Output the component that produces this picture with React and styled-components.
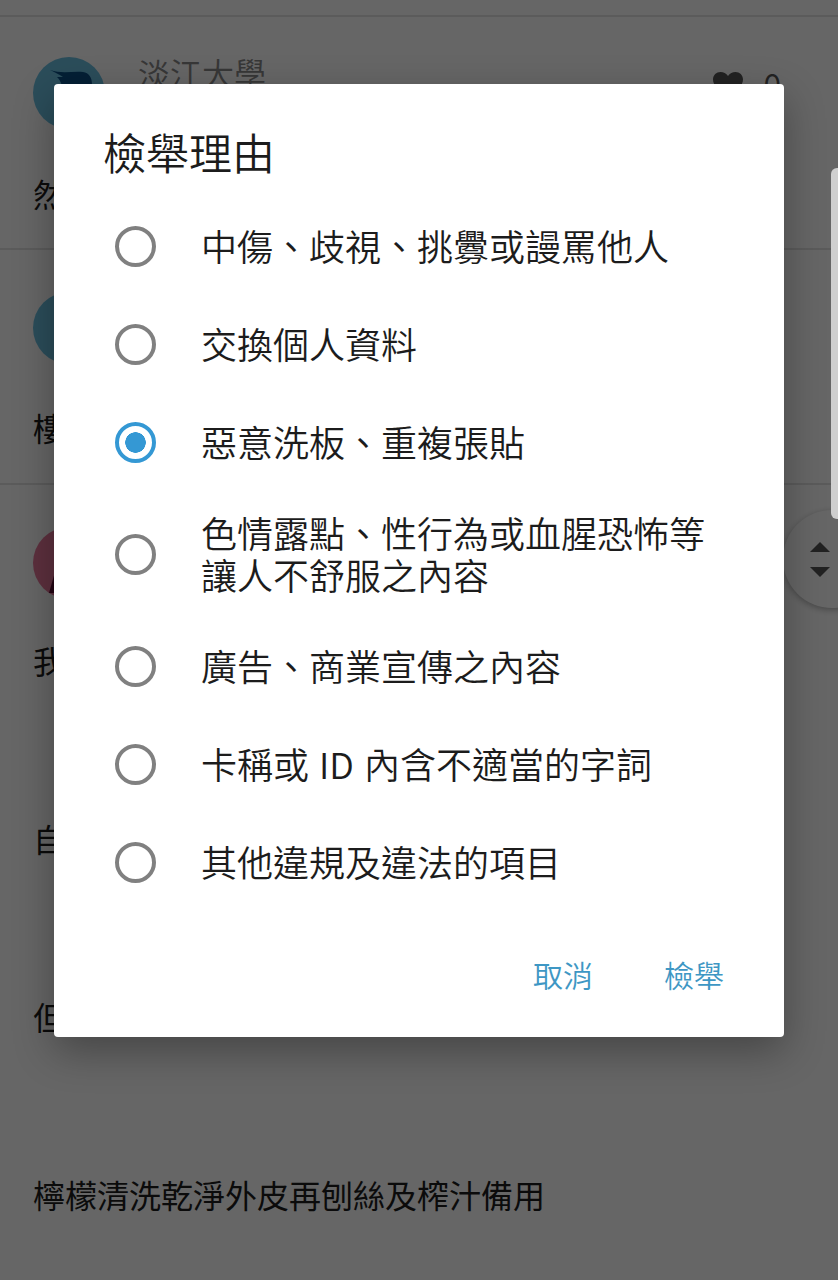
import React, { useState } from "react";
import styled, { createGlobalStyle } from "styled-components";

const reasons = [
  "中傷、歧視、挑釁或謾罵他人",
  "交換個人資料",
  "惡意洗板、重複張貼",
  "色情露點、性行為或血腥恐怖等讓人不舒服之內容",
  "廣告、商業宣傳之內容",
  "卡稱或 ID 內含不適當的字詞",
  "其他違規及違法的項目",
];

const App = () => {
  const [selected, setSelected] = useState(2);
  return (
    <Page>
      <GlobalStyle />
      <TopBar />
      <Post>
        <PostHeader>
          <Avatar color="#6bc0e2">
            <svg width="72" height="72" viewBox="0 0 72 72">
              <path d="M17 13 C28 17 40 14 50 15 C56 16 59 20 59 28 L54 36 L30 36 C30 30 28 24 24 20 L30 20 C26 17 21 15 17 13Z" fill="#0a4f86" />
            </svg>
          </Avatar>
          <Name>淡江大學</Name>
          <Likes>
            <svg width="30" height="28" viewBox="0 0 24 22">
              <path d="M12 21.5 C5 15.5 0 11.5 0 6.5 C0 3 2.7 .5 6 .5 C8.4 .5 10.6 1.7 12 3.8 C13.4 1.7 15.6 .5 18 .5 C21.3 .5 24 3 24 6.5 C24 11.5 19 15.5 12 21.5Z" fill="#555" />
            </svg>
            <LikeCount>0</LikeCount>
          </Likes>
        </PostHeader>
        <Body offset={42}>
          <Line>然</Line>
        </Body>
      </Post>
      <Post>
        <PostHeader>
          <Avatar color="#6bc0e2" />
        </PostHeader>
        <Body offset={41}>
          <Line>樓</Line>
        </Body>
      </Post>
      <Post last>
        <PostHeader>
          <Avatar color="#e8799c">
            <svg width="72" height="72" viewBox="0 0 72 72">
              <path d="M16 66 L28 24 L32 24 L27 66Z" fill="#5a0a30" />
            </svg>
          </Avatar>
        </PostHeader>
        <Body offset={39}>
          <Line>我</Line>
          <Line>自</Line>
          <Line>但</Line>
          <Line>檸檬清洗乾淨外皮再刨絲及榨汁備用</Line>
        </Body>
      </Post>

      <ScrollButton>
        <ArrowUp />
        <ArrowDown />
      </ScrollButton>

      <Overlay>
        <Dialog>
          <Title>檢舉理由</Title>
          <ReasonList>
            {reasons.map((text, i) => (
              <Reason key={text} onClick={() => setSelected(i)}>
                <Radio checked={selected === i} />
                <ReasonText>{text}</ReasonText>
              </Reason>
            ))}
          </ReasonList>
          <Actions>
            <ActionButton>取消</ActionButton>
            <ActionButton>檢舉</ActionButton>
          </Actions>
        </Dialog>
      </Overlay>
      <ScrollThumb />
    </Page>
  );
};
export default App;

const GlobalStyle = createGlobalStyle`
  html, body {
    margin: 0;
    padding: 0;
    background: #fff;
  }
  * {
    box-sizing: border-box;
  }
`;

const Page = styled.div`
  position: relative;
  height: 1280px;
  overflow: hidden;
  background: #fff;
  color: #1c1c1c;
  font-family: "Noto Sans CJK TC", "Noto Sans", sans-serif;
  font-weight: 350;
`;

const TopBar = styled.div`
  height: 17px;
  border-bottom: 2px solid #e4e4e4;
`;

const Post = styled.div`
  padding: 40px 33px 0;
  height: ${({ last }) => (last ? "auto" : "233px")};
  margin-bottom: 2px;
  border-bottom: ${({ last }) => (last ? "none" : "2px solid #e4e4e4")};
`;

const PostHeader = styled.div`
  display: flex;
  align-items: flex-start;
  gap: 33px;
  height: 72px;
`;

const Avatar = styled.div`
  width: 72px;
  height: 72px;
  flex-shrink: 0;
  border-radius: 50%;
  overflow: hidden;
  background: ${({ color }) => color};
  svg {
    display: block;
  }
`;

const Name = styled.div`
  margin-top: -5px;
  font-size: 32px;
  line-height: 40px;
  color: #8a8a8a;
`;

const Likes = styled.div`
  display: flex;
  align-items: center;
  gap: 20px;
  margin: 14px 24px 0 auto;
`;

const LikeCount = styled.span`
  margin-top: -4px;
  font-size: 32px;
  line-height: 28px;
  color: #555;
`;

const Body = styled.div`
  display: flex;
  flex-direction: column;
  gap: 134px;
  padding-top: ${({ offset }) => offset}px;
`;

const Line = styled.div`
  font-size: 32px;
  font-weight: 400;
  line-height: 44px;
`;

const ScrollThumb = styled.div`
  position: absolute;
  top: 168px;
  right: 0;
  width: 7px;
  height: 351px;
  background: #cfcfcf;
  border-radius: 6px 0 0 6px;
`;

const ScrollButton = styled.div`
  position: absolute;
  top: 510px;
  left: 783px;
  width: 98px;
  height: 98px;
  border-radius: 50%;
  background: #fff;
  box-shadow: 0 2px 6px rgba(0, 0, 0, 0.3);
  display: flex;
  flex-direction: column;
  align-items: flex-start;
  justify-content: center;
  gap: 15px;
  padding-left: 27px;
`;

const ArrowUp = styled.span`
  width: 0;
  height: 0;
  border-left: 10px solid transparent;
  border-right: 10px solid transparent;
  border-bottom: 10px solid #555;
`;

const ArrowDown = styled.span`
  width: 0;
  height: 0;
  border-left: 10px solid transparent;
  border-right: 10px solid transparent;
  border-top: 10px solid #555;
`;

const Overlay = styled.div`
  position: absolute;
  inset: 0;
  display: flex;
  justify-content: center;
  align-items: flex-start;
  padding-top: 84px;
  background: rgba(0, 0, 0, 0.6);
`;

const Dialog = styled.div`
  width: 730px;
  height: 953px;
  display: flex;
  flex-direction: column;
  background: #fff;
  border-radius: 4px;
  box-shadow: 0 14px 40px rgba(0, 0, 0, 0.32);
`;

const Title = styled.h2`
  margin: 37px 0 16px;
  padding-left: 49px;
  font-size: 43px;
  line-height: 60px;
  font-weight: 350;
  color: #1c1c1c;
`;

const ReasonList = styled.div`
  display: flex;
  flex-direction: column;
`;

const Reason = styled.label`
  display: flex;
  align-items: center;
  gap: 45px;
  min-height: 98px;
  padding: 20px 56px 20px 61px;
  cursor: pointer;
`;

const Radio = styled.span`
  width: 41px;
  height: 41px;
  flex-shrink: 0;
  border-radius: 50%;
  border: 4px solid ${({ checked }) => (checked ? "#3498d4" : "#808080")};
  background: ${({ checked }) => (checked ? "radial-gradient(circle, #3498d4 0 10px, #fff 10.5px)" : "#fff")};
`;

const ReasonText = styled.span`
  padding-bottom: 2px;
  font-size: 36px;
  line-height: 42px;
  word-spacing: 2px;
  color: #1c1c1c;
`;

const Actions = styled.div`
  display: flex;
  justify-content: flex-end;
  gap: 71px;
  margin-top: 39px;
  padding-right: 60px;
`;

const ActionButton = styled.button`
  padding: 0;
  border: none;
  background: none;
  font: inherit;
  font-size: 30px;
  line-height: 48px;
  color: #3e97c4;
  cursor: pointer;
`;
